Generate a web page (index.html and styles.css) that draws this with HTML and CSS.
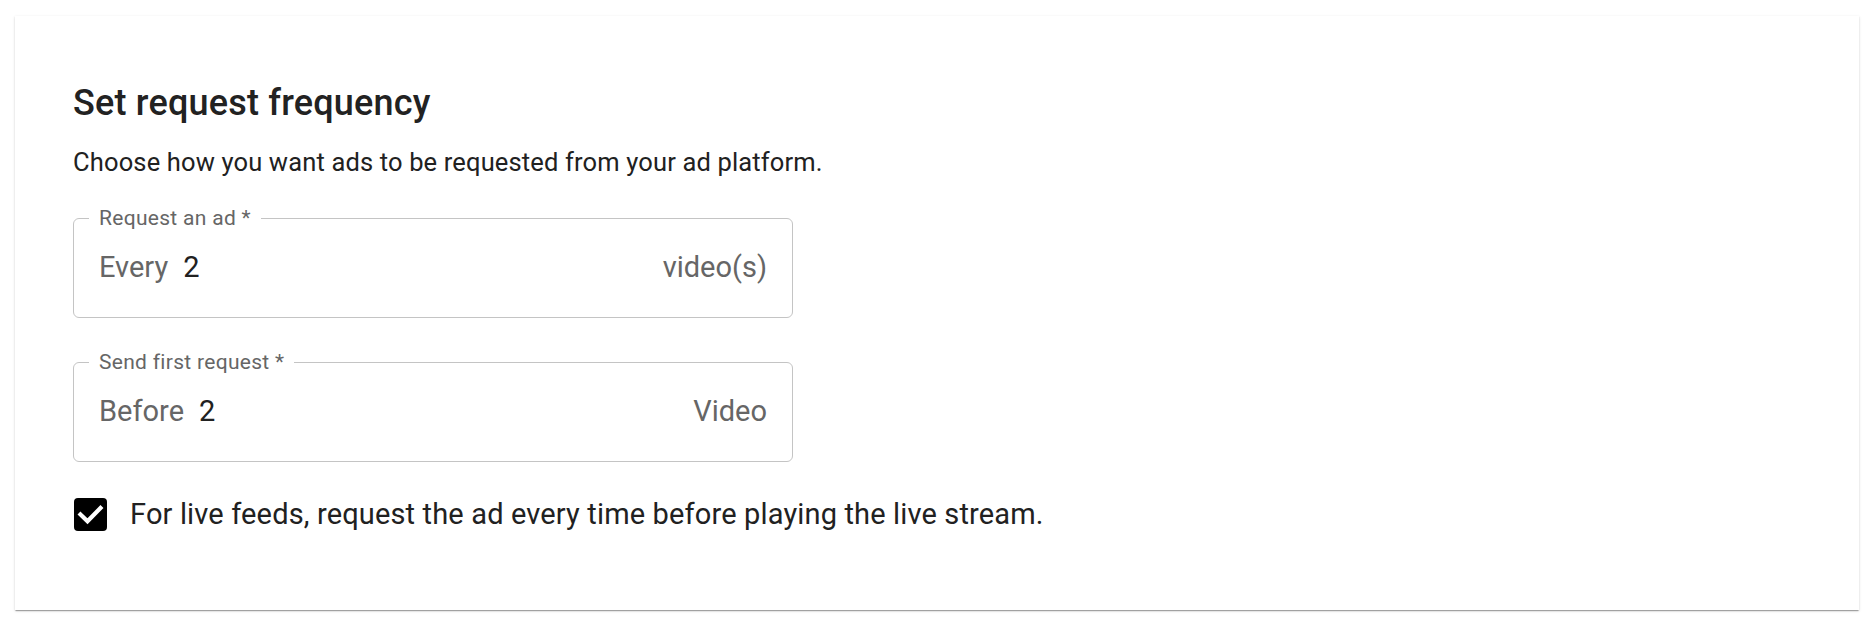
FILE: index.html
```html
<!DOCTYPE html>
<html lang="en">
<head>
  <meta charset="UTF-8"/>
  <title>Set request frequency</title>
  <link rel="stylesheet" href="styles.css">
</head>
<body>
  <div class="card">
    <h2 class="card-title">Set request frequency</h2>
    <p class="card-desc">Choose how you want ads to be requested from your ad platform.</p>

    <fieldset class="field">
      <legend>Request an ad *</legend>
      <div class="field-row">
        <span class="prefix">Every</span>
        <span class="value">2</span>
        <span class="suffix">video(s)</span>
      </div>
    </fieldset>

    <fieldset class="field">
      <legend>Send first request *</legend>
      <div class="field-row">
        <span class="prefix">Before</span>
        <span class="value">2</span>
        <span class="suffix">Video</span>
      </div>
    </fieldset>

    <label class="check">
      <span class="check-box">
        <svg viewBox="0 0 33 33" fill="none" stroke="#fff">
          <path d="M6.5 16.5l7 6.8L26.5 10" stroke-width="4.2" stroke-linecap="square"/>
        </svg>
      </span>
      <span class="check-text">For live feeds, request the ad every time before playing the live stream.</span>
    </label>
  </div>
</body>
</html>
```

FILE: styles.css
```css
body { margin:0; padding:16px 17px 16px 15px; background:#fff; color:#212121; font-family:Roboto,"Liberation Sans",sans-serif; }
.card {
  box-sizing:border-box; height:594px; background:#fff; padding:65px 58px 0 58px;
  box-shadow:0 2px 1px -1px rgba(0,0,0,.2), 0 1px 1px 0 rgba(0,0,0,.14), 0 1px 3px 0 rgba(0,0,0,.12);
}
.card-title { margin:0; font-size:36px; line-height:44px; font-weight:500; letter-spacing:.2px; color:#222; }
.card-desc { margin:21px 0 0; font-size:25.5px; line-height:32px; letter-spacing:.15px; }

.field {
  box-sizing:border-box; width:720px; margin:28px 0 0; min-width:0;
  border:1px solid #c4c4c4; border-radius:6px; padding:19px 25px 32px 15px;
}
.field + .field { margin-top:32px; }
.field legend { padding:0 10px; font-size:21px; line-height:24px; color:#666; letter-spacing:.3px; }
.field-row { display:flex; align-items:baseline; margin-left:10px; font-size:29px; line-height:36px; }
.prefix { color:#666; margin-right:15px; }
.value { color:#212121; }
.suffix { margin-left:auto; color:#666; }

.check { display:flex; align-items:center; gap:23px; margin:34px 0 0 1px; }
.check-box { width:33px; height:33px; border-radius:4px; background:#000; display:flex; }
.check-box svg { width:33px; height:33px; display:block; }
.check-text { font-size:29px; line-height:36px; letter-spacing:.15px; }
```
